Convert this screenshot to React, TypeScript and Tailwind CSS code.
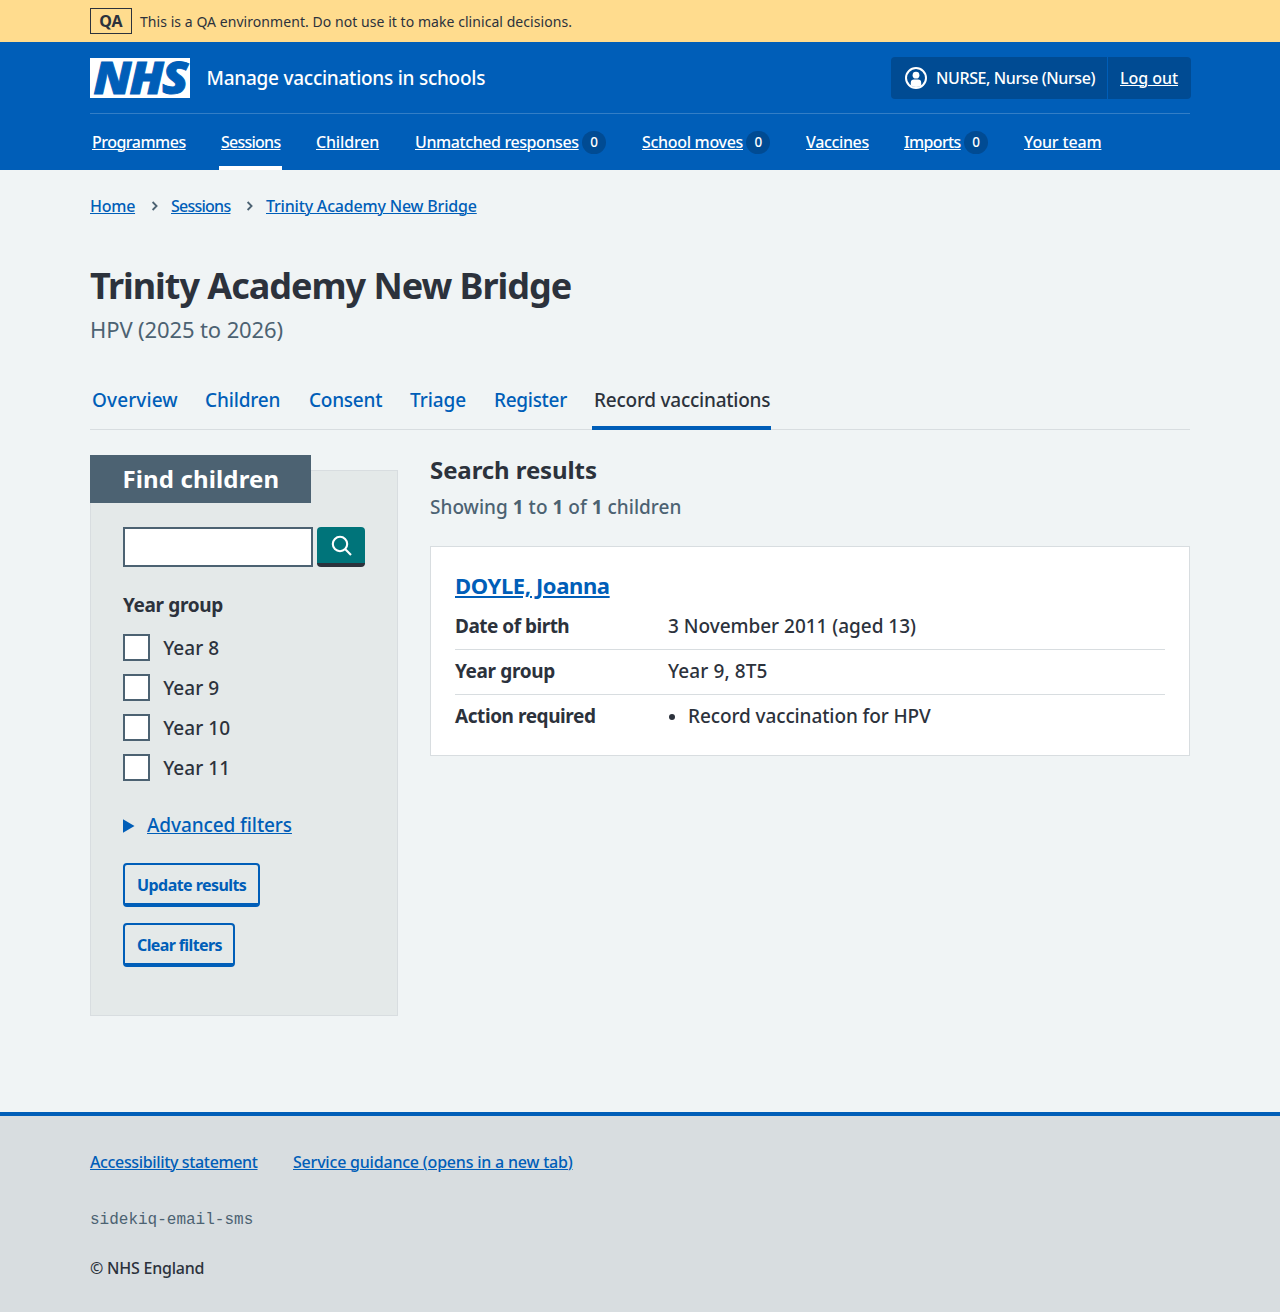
import type { ReactNode } from "react";

const link = "text-[#005eb8] underline decoration-1 underline-offset-[1px]";

function Badge({ children }: { children: ReactNode }) {
  return (
    <span className="ml-[3.5px] inline-flex h-[23px] w-6 shrink-0 items-center justify-center rounded-full bg-[#004b93] pt-[1px] text-[13.5px] font-medium leading-none">
      {children}
    </span>
  );
}

const navItems = [
  { label: "Programmes", box: "w-[97px]", text: "tracking-[-0.032em]" },
  { label: "Sessions", box: "w-[63px]", text: "tracking-[-0.047em]", active: true },
  { label: "Children", box: "w-[67px]", text: "tracking-[-0.01em]" },
  { label: "Unmatched responses", box: "w-[195px]", text: "tracking-[-0.0252em]", count: 0 },
  { label: "School moves", box: "w-[132px]", text: "tracking-[-0.0195em]", count: 0 },
  { label: "Vaccines", box: "w-[66px]", text: "tracking-[-0.0222em]" },
  { label: "Imports", box: "w-[88px]", text: "tracking-[-0.04em]", count: 0 },
  { label: "Your team", box: "w-[81px]", text: "tracking-[-0.0103em]" },
];

const tabs = [
  { label: "Overview", box: "w-[89px]", text: "tracking-[0.006em]" },
  { label: "Children", box: "w-[80px]", text: "tracking-[-0.008em]" },
  { label: "Consent", box: "w-[77px]", text: "tracking-[-0.013em]" },
  { label: "Triage", box: "w-[60px]", text: "tracking-[-0.003em]" },
  { label: "Register", box: "w-[76px]", text: "tracking-[-0.0155em]" },
  { label: "Record vaccinations", box: "w-[179px]", text: "tracking-[-0.0127em]", active: true },
];

const years = ["Year 8", "Year 9", "Year 10", "Year 11"];

function Chevron() {
  return (
    <svg width="8" height="10" viewBox="0 0 8 10" className="-mt-px shrink-0" fill="none" stroke="#4c6272" strokeWidth="1.8">
      <path d="M1.6 1 L5.6 5 L1.6 9" />
    </svg>
  );
}

function Header() {
  return (
    <header className="h-32 bg-[#005eb8] text-white">
      <div className="mx-auto w-[1100px]">
        <div className="flex h-[72px] items-center border-b border-[#337ec6]">
          <svg width="100" height="40" viewBox="0 0 100 40" className="shrink-0 overflow-visible bg-white">
            <text
              x="3.5"
              y="36"
              textLength="93"
              lengthAdjust="spacingAndGlyphs"
              className="fill-[#005eb8] stroke-[#005eb8] font-['Open_Sans',sans-serif] text-[44px] font-extrabold italic tracking-[-0.04em]"
              strokeWidth="0.9"
            >
              NHS
            </text>
          </svg>
          <span className="ml-[16.5px] text-[19px] font-medium leading-7 tracking-[-0.0134em]">Manage vaccinations in schools</span>
          <div className="-mr-px ml-auto flex h-[42px] w-[300px] items-stretch rounded bg-[#004b93] text-[16px] font-medium">
            <div className="flex w-[217px] items-center border-r border-[#005eb8] pl-[14px]">
              <svg width="22" height="22" viewBox="0 0 22 22" className="shrink-0">
                <circle cx="11" cy="11" r="10" fill="none" stroke="#fff" strokeWidth="2" />
                <circle cx="11" cy="8.2" r="3.4" fill="#fff" />
                <path d="M5.8 18.5 V15.8 Q5.8 12.6 9 12.6 H13 Q16.2 12.6 16.2 15.8 V18.5 Q11 21.5 5.8 18.5Z" fill="#fff" />
              </svg>
              <span className="ml-[9px] whitespace-nowrap tracking-[-0.025em]">NURSE, Nurse (Nurse)</span>
            </div>
            <a className="flex items-center pl-3 tracking-[-0.003em] underline decoration-1 underline-offset-[1px]">Log out</a>
          </div>
        </div>
        <nav className="flex h-14 gap-8">
          {navItems.map((n) => (
            <div
              key={n.label}
              className={`flex items-center whitespace-nowrap border-b-4 px-[2px] pt-[4px] text-[16px] font-medium leading-6 ${n.box} ${
                n.active ? "border-white" : "border-transparent"
              }`}
            >
              <a className={`underline decoration-1 underline-offset-[1px] ${n.text}`}>{n.label}</a>
              {n.count !== undefined && <Badge>{n.count}</Badge>}
            </div>
          ))}
        </nav>
      </div>
    </header>
  );
}

function Filters() {
  return (
    <aside className="mt-10 h-[546px] w-[308px] border border-[#d8dde0] bg-[#e4e9e9]">
      <h2 className="-ml-px -mt-4 flex h-12 w-[221px] items-center bg-[#4c6272] pl-[32.5px] text-[24px] font-bold tracking-[0.0055em] text-white">
        Find children
      </h2>
      <div className="px-8 pt-6">
        <div className="flex gap-1">
          <input className="h-10 w-[190px] border-2 border-[#4c6272] bg-white" aria-label="Search" />
          <button className="flex h-10 w-12 items-center justify-center rounded border-b-4 border-[#2c323c] bg-[#00747a]" aria-label="Search">
            <svg width="22" height="22" viewBox="0 0 22 22" className="ml-[2px] mt-[2px]" fill="none" stroke="#fff" strokeWidth="2.1">
              <circle cx="9" cy="9" r="7.2" />
              <path d="M14.1 14.1 L20 20" />
            </svg>
          </button>
        </div>
        <h3 className="mt-[24px] text-[19px] font-bold leading-[28px] tracking-[-0.0185em]">Year group</h3>
        <div className="mt-[10px]">
          {years.map((y) => (
            <label key={y} className="flex h-10 items-center pb-[2px] text-[19px] font-medium leading-7 tracking-[0.002em]">
              <span className="mr-[13.5px] mt-[-1px] size-[26.67px] border-2 border-[#4c6272] bg-white" />
              {y}
            </label>
          ))}
        </div>
        <div className="mt-[22px] flex h-7 items-center">
          <svg width="12" height="14" viewBox="0 0 12 14" className="mt-[2px] fill-[#005eb8]">
            <path d="M0 0.2 L11.5 7 L0 13.8Z" />
          </svg>
          <a className={`ml-[12px] text-[19px] font-medium tracking-[-0.005em] ${link}`}>Advanced filters</a>
        </div>
        <div className="mt-[24px] flex flex-col items-start gap-4 text-[16px] font-bold text-[#005eb8]">
          <button className="h-11 w-[137px] whitespace-nowrap rounded border-2 border-b-4 border-[#005eb8] pl-3 pt-[1px] text-left tracking-[-0.035em]">
            Update results
          </button>
          <button className="h-11 w-[112px] whitespace-nowrap rounded border-2 border-b-4 border-[#005eb8] pl-3 pt-[1px] text-left tracking-[-0.0386em]">
            Clear filters
          </button>
        </div>
      </div>
    </aside>
  );
}

function Results() {
  return (
    <section className="ml-8 w-[760px] pt-6">
      <h2 className="text-[24px] font-bold leading-8 tracking-[-0.004em]">Search results</h2>
      <p className="mt-[7px] text-[19px] font-medium leading-7 tracking-[0.0005em] text-[#4c6272]">
        Showing <b className="font-bold">1</b> to <b className="font-bold">1</b> of <b className="font-bold">1</b> children
      </p>
      <div className="mt-[25px] h-[210px] border border-[#d8dde0] bg-white px-6 pt-6 text-[19px] leading-7">
        <h3 className="mb-[4px] text-[22px] font-bold leading-7 tracking-[-0.0175em]">
          <a className="text-[#005eb8] underline decoration-2 underline-offset-[2px]">DOYLE, Joanna</a>
        </h3>
        <dl className="font-medium">
          <div className="flex h-[47px] border-b border-[#d8dde0] pt-[9px]">
            <dt className="w-[213px] font-bold tracking-[-0.0265em]">Date of birth</dt>
            <dd className="tracking-[-0.0015em]">3 November 2011 (aged 13)</dd>
          </div>
          <div className="flex h-[45px] border-b border-[#d8dde0] pt-[7px]">
            <dt className="w-[213px] font-bold tracking-[-0.0185em]">Year group</dt>
            <dd className="tracking-[0.0056em]">Year 9, 8T5</dd>
          </div>
          <div className="flex pt-[7px]">
            <dt className="w-[213px] font-bold tracking-[-0.023em]">Action required</dt>
            <dd className="flex items-center tracking-[-0.0056em]">
              <span className="ml-[1px] mr-[13px] mt-[2px] size-[6px] rounded-full bg-[#2c323c]" />
              Record vaccination for HPV
            </dd>
          </div>
        </dl>
      </div>
    </section>
  );
}

export default function App() {
  return (
    <div className="flex h-[1312px] flex-col bg-[#f0f4f5] font-['Noto_Sans',sans-serif] text-[#2c323c]">
      <div className="h-[42px] shrink-0 bg-[#ffdc8e]">
        <div className="mx-auto flex h-full w-[1100px] items-center">
          <strong className="flex h-[26px] w-[42px] items-center justify-center border border-[#2c323c] text-[16px] font-bold tracking-[0.01em]">QA</strong>
          <span className="ml-2 mt-px text-[14px] leading-5 tracking-[0.0039em]">
            This is a QA environment. Do not use it to make clinical decisions.
          </span>
        </div>
      </div>
      <Header />
      <main className="mx-auto h-[942px] w-[1100px] shrink-0">
        <nav className="mt-6 flex h-6 items-center text-[16px] font-medium leading-6">
          <a className={`w-[61px] tracking-[-0.016em] ${link}`}>Home</a>
          <Chevron />
          <a className={`ml-[12px] w-[75px] tracking-[-0.047em] ${link}`}>Sessions</a>
          <Chevron />
          <a className={`ml-[12px] tracking-[-0.0118em] ${link}`}>Trinity Academy New Bridge</a>
        </nav>
        <h1 className="mt-[44px] text-[36px] font-bold leading-[48px] tracking-[-0.0285em]">Trinity Academy New Bridge</h1>
        <p className="mt-[3px] text-[22px] leading-8 tracking-[-0.0053em] text-[#4c6272]">HPV (2025 to 2026)</p>
        <nav className="mt-[25px] flex h-[60px] gap-6 border-b border-[#d8dde0] text-[19px] font-medium leading-7">
          {tabs.map((t) => (
            <a
              key={t.label}
              className={`-mb-px whitespace-nowrap border-b-4 px-[2px] pt-[15.5px] ${t.box} ${t.text} ${
                t.active ? "border-[#005eb8] text-[#2c323c]" : "border-transparent text-[#005eb8]"
              }`}
            >
              {t.label}
            </a>
          ))}
        </nav>
        <div className="flex items-start">
          <Filters />
          <Results />
        </div>
      </main>
      <footer className="h-[200px] shrink-0 border-t-4 border-[#005eb8] bg-[#d8dde0]">
        <div className="mx-auto w-[1100px] pt-[34px] text-[16px] font-medium leading-6">
          <div className="flex">
            <a className={`w-[203px] tracking-[-0.0223em] ${link}`}>Accessibility statement</a>
            <a className={`tracking-[-0.0128em] ${link}`}>Service guidance (opens in a new tab)</a>
          </div>
          <p className="mt-[34px] font-['Liberation_Mono',monospace] font-normal text-[#4c6272]">sidekiq-email-sms</p>
          <p className="mt-[24px] tracking-[-0.0141em]">© NHS England</p>
        </div>
      </footer>
    </div>
  );
}
